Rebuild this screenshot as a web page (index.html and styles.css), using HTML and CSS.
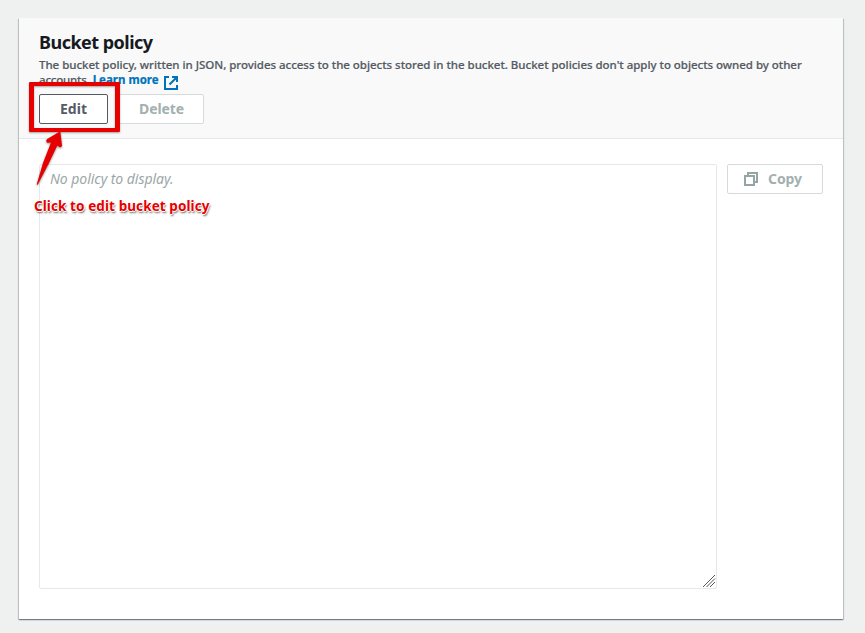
FILE: index.html
```html
<!DOCTYPE html>
<html lang="en">
<head>
<meta charset="utf-8">
<title>Bucket policy</title>
<link rel="stylesheet" href="styles.css">
</head>
<body>
<main class="card">
  <header class="card-header">
    <h2 class="title"><span>Bucket policy</span></h2>
    <p class="description"><span class="line-one">The bucket policy, written in JSON, provides access to the objects stored in the bucket. Bucket policies don't apply to objects owned by other</span><br><span class="line-two">accounts.</span> <a class="learn">Learn more<svg class="external" viewBox="0 0 16 16"><path d="M6 2H2v12h12v-4M9 2h5v5M14 2L6.5 9.5"/></svg></a></p>
    <div class="actions">
      <button class="button edit"><span>Edit</span></button>
      <button class="button delete"><span>Delete</span></button>
    </div>
  </header>
  <section class="content">
    <div class="policy"><span class="placeholder">No policy to display.</span>
      <svg class="grip" viewBox="0 0 14 14"><path d="M1 13L13 1M4.5 13L13 4.5M8 13L13 8"/></svg>
    </div>
    <button class="button copy"><svg class="copy-icon" viewBox="0 0 14 14"><path d="M1 4h9v9H1zM4 4V1h9v9h-3"/></svg><span>Copy</span></button>
  </section>
</main>
<div class="highlight"></div>
<svg class="arrow" viewBox="0 0 40 62"><path d="M6.7 54.5L13 33L21 12.5L17.5 12.8Q15.5 11.5 16.8 9.2L30.3 1.2L32 15.5Q31.6 18 29.4 17L27.3 15.5L18.5 34L7.7 54.8Z"/></svg>
<div class="note">Click to edit bucket policy</div>
</body>
</html>
```
FILE: styles.css
```css
* { box-sizing: border-box; }
body {
  margin: 0;
  padding: 18px 22px 14px 19px;
  height: 633px;
  overflow: hidden;
  background: #eff1f1;
  color: #16191f;
  font-family: "Noto Sans", sans-serif;
}
.card {
  height: 601px;
  background: #fff;
  box-shadow: 0 1px 1px rgba(0, 28, 36, .3), 1px 1px 1px rgba(0, 28, 36, .18), -1px 1px 1px rgba(0, 28, 36, .18);
}
.card-header {
  height: 121px;
  padding: 12px 20px 0;
  background: #f9f9f9;
  border-bottom: 1px solid #e4e8e8;
}
.title { margin: 0; font-size: 18px; line-height: 24px; font-weight: 700; letter-spacing: -.52px; white-space: nowrap; }
.description { margin: 3px 0 0; height: 37px; font-size: 11.5px; line-height: 15px; font-weight: 500; color: #545b64; white-space: nowrap; -webkit-text-stroke: .2px currentColor; }
.line-one { letter-spacing: -.03px; }
.line-two { letter-spacing: -.2px; }
.learn { color: #0073bb; font-weight: 700; }
.external { width: 16px; height: 16px; margin-left: 4px; vertical-align: -7px; fill: none; stroke: #0073bb; stroke-width: 2; }
.actions { display: flex; gap: 10px; }
.button {
  display: flex;
  align-items: center;
  justify-content: center;
  height: 30px;
  padding: 0;
  background: #fff;
  border: 1px solid #d5dbdb;
  border-radius: 2px;
  font: 700 14px/20px "Noto Sans", sans-serif;
  color: #a3b0b0;
}
.edit { width: 69px; border-color: #545b64; color: #545b64; }
.delete { width: 86px; letter-spacing: -.1px; padding-left: 1px; }
.content { display: flex; align-items: flex-start; gap: 10px; padding: 25px 20px 0; }
.policy { position: relative; width: 678px; height: 425px; padding: 4px 10px; border: 1px solid #e6e9e9; border-radius: 2px; }
.placeholder { display: block; font-size: 14px; line-height: 20px; font-style: italic; color: #9ba7a7; white-space: nowrap; letter-spacing: -.04px; }
.grip { position: absolute; right: 0; bottom: 0; width: 14px; height: 14px; stroke: #555; stroke-width: 1; fill: none; }
.copy { width: 96px; gap: 10px; padding-right: 4px; letter-spacing: -.1px; }
.copy-icon { width: 14px; height: 14px; fill: none; stroke: #95a5a6; stroke-width: 2; }
.highlight {
  position: absolute;
  left: 29px;
  top: 82px;
  width: 91px;
  height: 50px;
  border: 5px solid #e60000;
  border-width: 4px 5px;
  border-radius: 1px;
  box-shadow: 0 1px 2px rgba(0, 0, 0, .35), inset 0 1px 2px rgba(0, 0, 0, .35);
}
.arrow { position: absolute; left: 30px; top: 130px; width: 40px; height: 62px; fill: #e60000; filter: drop-shadow(0 1px 1px rgba(0, 0, 0, .45)); }
.note {
  position: absolute;
  left: 34px;
  top: 196px;
  font-size: 13.5px;
  line-height: 20px;
  font-weight: 700;
  letter-spacing: .09px;
  color: #e60000;
  white-space: nowrap;
  text-shadow: 1px 0 #fff, -1px 0 #fff, 0 1px #fff, 0 -1px #fff, 1px 2px 2px rgba(0, 0, 0, .6);
}
```
